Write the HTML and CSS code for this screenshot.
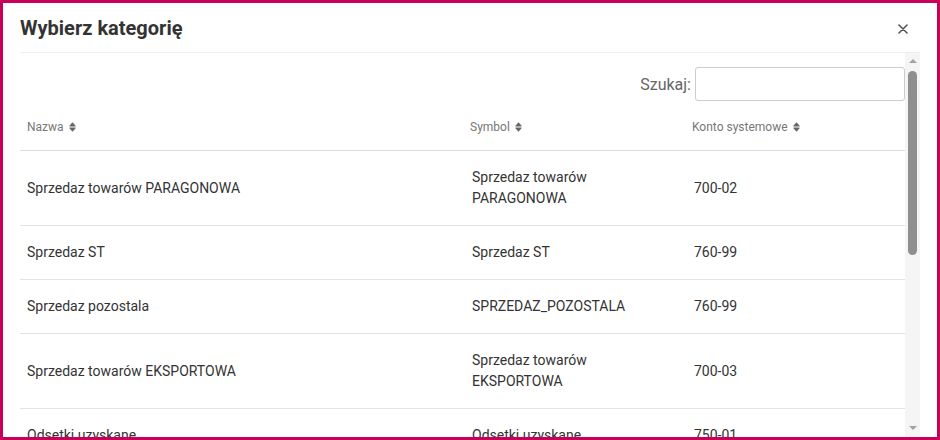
FILE: index.html
```html
<!DOCTYPE html>
<html lang="pl">
<head>
<meta charset="utf-8">
<title>Wybierz kategorię</title>
<link rel="stylesheet" href="styles.css">
</head>
<body>
<div class="frame">
  <div class="modal-header">
    <h4 class="modal-title">Wybierz kategorię</h4>
    <button class="close" aria-label="Zamknij">
      <svg width="10" height="10" viewBox="0 0 10 10"><path d="M1 1L9 9M9 1L1 9" stroke="#555" stroke-width="1.6" stroke-linecap="round"/></svg>
    </button>
  </div>
  <div class="modal-body">
    <div class="content">
      <div class="search">
        <label class="search-label" for="q">Szukaj:</label>
        <input id="q" class="search-input" type="search">
      </div>
      <table class="grid">
        <colgroup>
          <col class="c-name"><col class="c-symbol"><col class="c-konto">
        </colgroup>
        <thead>
          <tr>
            <th>Nazwa <span class="sort"><svg width="7" height="10" viewBox="0 0 7 10"><path d="M3.5 0.3L6.8 4H0.2Z M3.5 9.7L6.8 6H0.2Z M0.5 4.6H6.5V5.4H0.5Z" fill="#666"/></svg></span></th>
            <th>Symbol <span class="sort"><svg width="7" height="10" viewBox="0 0 7 10"><path d="M3.5 0.3L6.8 4H0.2Z M3.5 9.7L6.8 6H0.2Z M0.5 4.6H6.5V5.4H0.5Z" fill="#666"/></svg></span></th>
            <th>Konto systemowe <span class="sort"><svg width="7" height="10" viewBox="0 0 7 10"><path d="M3.5 0.3L6.8 4H0.2Z M3.5 9.7L6.8 6H0.2Z M0.5 4.6H6.5V5.4H0.5Z" fill="#666"/></svg></span></th>
          </tr>
        </thead>
        <tbody>
          <tr><td>Sprzedaz towarów PARAGONOWA</td><td class="sym">Sprzedaz towarów<br>PARAGONOWA</td><td class="kon">700-02</td></tr>
          <tr><td>Sprzedaz ST</td><td class="sym">Sprzedaz ST</td><td class="kon">760-99</td></tr>
          <tr><td>Sprzedaz pozostala</td><td class="sym">SPRZEDAZ_POZOSTALA</td><td class="kon">760-99</td></tr>
          <tr><td>Sprzedaz towarów EKSPORTOWA</td><td class="sym">Sprzedaz towarów<br>EKSPORTOWA</td><td class="kon">700-03</td></tr>
          <tr><td>Odsetki uzyskane</td><td class="sym">Odsetki uzyskane</td><td class="kon">750-01</td></tr>
        </tbody>
      </table>
    </div>
    <div class="scrollbar">
      <span class="arrow up"></span>
      <span class="thumb"></span>
      <span class="spacer"></span>
      <span class="arrow down"></span>
    </div>
  </div>
</div>
</body>
</html>
```
FILE: styles.css
```css
html, body {
  margin: 0;
  padding: 0;
  background: #fff;
}
body {
  font-family: Roboto, "Liberation Sans", Arial, sans-serif;
  color: #333;
}
.frame {
  width: 940px;
  height: 440px;
  box-sizing: border-box;
  border: 3px solid #c8005a;
  background: #fff;
  display: flex;
  flex-direction: column;
  overflow: hidden;
}
.modal-header {
  margin: 0 17px;
  height: 50px;
  flex: none;
  display: flex;
  align-items: center;
  justify-content: space-between;
  border-bottom: 1px solid #efefef;
  box-sizing: border-box;
}
.modal-title {
  margin: 0;
  font-size: 20px;
  font-weight: 700;
  color: #333;
  padding-top: 1px;
}
.close {
  border: 0;
  background: none;
  padding: 0;
  margin-right: 11px;
  width: 12px;
  height: 12px;
  display: flex;
  align-items: center;
  justify-content: center;
  margin-top: 2px;
}
.modal-body {
  flex: 1;
  margin: 0 17px;
  display: flex;
  min-height: 0;
  overflow: hidden;
}
.content {
  flex: 1;
  min-width: 0;
  overflow: hidden;
}
.search {
  display: flex;
  justify-content: flex-end;
  align-items: center;
  gap: 4px;
  padding-top: 14px;
}
.search-label {
  font-size: 16px;
  color: #666;
}
.search-input {
  width: 210px;
  height: 34px;
  box-sizing: border-box;
  border: 1px solid #ccc;
  border-radius: 3px;
  margin: 0;
  font-size: 14px;
}
.grid {
  width: 100%;
  border-collapse: collapse;
  table-layout: fixed;
}
.c-name { width: 443px; }
.c-symbol { width: 222px; }
.grid th {
  text-align: left;
  font-weight: 400;
  font-size: 12px;
  line-height: 14px;
  color: #777;
  padding: 19px 7px 16px;
  border-bottom: 1px solid #ddd;
}
.sort {
  display: inline-block;
  vertical-align: -1px;
  margin-left: 2px;
}
.sort svg { display: block; }
.grid td {
  font-size: 14px;
  line-height: 21px;
  color: #333;
  padding: 16px 7px;
  border-bottom: 1px solid #e2e2e2;
  vertical-align: middle;
}
.grid td.sym, .grid td.kon {
  padding-left: 9px;
}
.scrollbar {
  width: 15px;
  flex: none;
  background: #f5f5f5;
  display: flex;
  flex-direction: column;
  align-items: center;
  padding: 6px 0 7px;
  box-sizing: border-box;
}
.arrow {
  width: 0;
  height: 0;
  border-left: 4px solid transparent;
  border-right: 4px solid transparent;
  flex: none;
}
.arrow.up {
  border-bottom: 4px solid #a3a3a3;
}
.arrow.down {
  border-top: 4px solid #a3a3a3;
}
.thumb {
  width: 9px;
  height: 184px;
  margin-top: 8px;
  background: #8f8f8f;
  border-radius: 5px;
  flex: none;
}
.spacer { flex: 1; }
```
